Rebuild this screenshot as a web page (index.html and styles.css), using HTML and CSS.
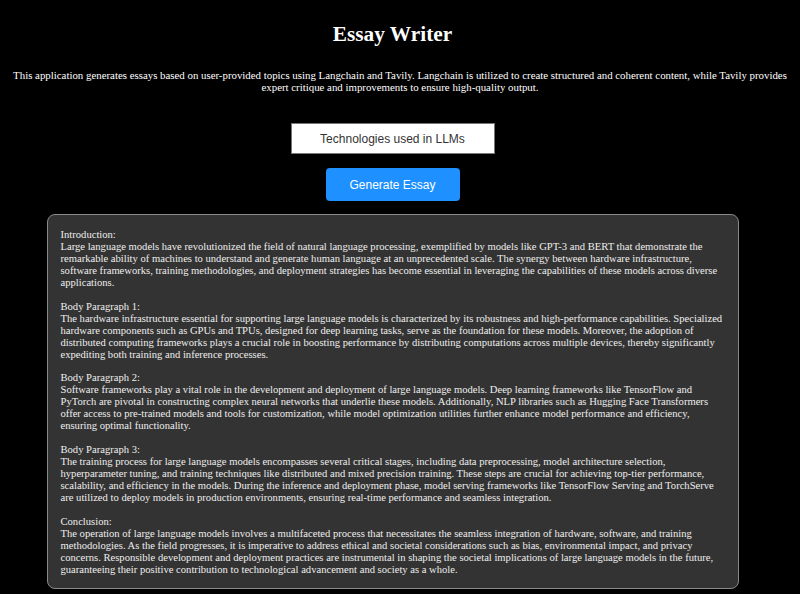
FILE: index.html
```html
<!DOCTYPE html>
<html lang="en">
<head>
<meta charset="utf-8">
<title>Essay Writer</title>
<link rel="stylesheet" href="styles.css">
</head>
<body>
<div class="page">
  <h1 class="title">Essay Writer</h1>
  <p class="intro">This application generates essays based on user-provided topics using Langchain and Tavily. Langchain is utilized to create structured and coherent content, while Tavily provides expert critique and improvements to ensure high-quality output.</p>
  <div class="controls">
    <input class="topic" type="text" value="Technologies used in LLMs">
    <button class="generate" type="button">Generate Essay</button>
  </div>
  <div class="essay">Introduction:
Large language models have revolutionized the field of natural language processing, exemplified by models like GPT-3 and BERT that demonstrate the remarkable ability of machines to understand and generate human language at an unprecedented scale. The synergy between hardware infrastructure, software frameworks, training methodologies, and deployment strategies has become essential in leveraging the capabilities of these models across diverse applications.

Body Paragraph 1:
The hardware infrastructure essential for supporting large language models is characterized by its robustness and high-performance capabilities. Specialized hardware components such as GPUs and TPUs, designed for deep learning tasks, serve as the foundation for these models. Moreover, the adoption of distributed computing frameworks plays a crucial role in boosting performance by distributing computations across multiple devices, thereby significantly expediting both training and inference processes.

Body Paragraph 2:
Software frameworks play a vital role in the development and deployment of large language models. Deep learning frameworks like TensorFlow and PyTorch are pivotal in constructing complex neural networks that underlie these models. Additionally, NLP libraries such as Hugging Face Transformers offer access to pre-trained models and tools for customization, while model optimization utilities further enhance model performance and efficiency, ensuring optimal functionality.

Body Paragraph 3:
The training process for large language models encompasses several critical stages, including data preprocessing, model architecture selection, hyperparameter tuning, and training techniques like distributed and mixed precision training. These steps are crucial for achieving top-tier performance, scalability, and efficiency in the models. During the inference and deployment phase, model serving frameworks like TensorFlow Serving and TorchServe are utilized to deploy models in production environments, ensuring real-time performance and seamless integration.

Conclusion:
The operation of large language models involves a multifaceted process that necessitates the seamless integration of hardware, software, and training methodologies. As the field progresses, it is imperative to address ethical and societal considerations such as bias, environmental impact, and privacy concerns. Responsible development and deployment practices are instrumental in shaping the societal implications of large language models in the future, guaranteeing their positive contribution to technological advancement and society as a whole.</div>
</div>
</body>
</html>
```

FILE: styles.css
```css
html, body {
  margin: 0;
  padding: 0;
  background: #000;
  color: #fff;
  font-family: "Liberation Serif", "Times New Roman", serif;
  overflow: hidden;
}

.page {
  box-sizing: border-box;
  width: 800px;
  padding-right: 15px;
  display: flex;
  flex-direction: column;
  align-items: center;
}

.title {
  margin: 21px 0 0;
  font-size: 21.3px;
  line-height: 26px;
  font-weight: bold;
  color: #fff;
}

.intro {
  align-self: stretch;
  margin: 22px -15px 0 0;
  padding: 0;
  font-size: 10.85px;
  line-height: 12px;
  text-align: center;
}

.controls {
  margin-top: 30px;
  display: flex;
  flex-direction: column;
  align-items: center;
  gap: 14px;
}

.topic {
  box-sizing: border-box;
  width: 204px;
  height: 31px;
  margin: 0;
  padding: 0 8px;
  border: 1px solid #777;
  background: #fff;
  color: #333;
  font-family: "Liberation Sans", Arial, sans-serif;
  font-size: 12px;
  text-align: center;
}

.generate {
  box-sizing: border-box;
  width: 134px;
  height: 33px;
  margin: 0;
  border: none;
  border-radius: 4px;
  background: #1e90ff;
  color: #fff;
  font-family: "Liberation Sans", Arial, sans-serif;
  font-size: 12px;
}

.essay {
  box-sizing: border-box;
  width: 692px;
  margin-top: 13px;
  padding: 14px 11px 12px 13px;
  border: 1px solid #8a8a8a;
  border-radius: 8px;
  background: #333;
  color: #eee;
  font-size: 10.6px;
  line-height: 11.95px;
  white-space: pre-wrap;
}
```
